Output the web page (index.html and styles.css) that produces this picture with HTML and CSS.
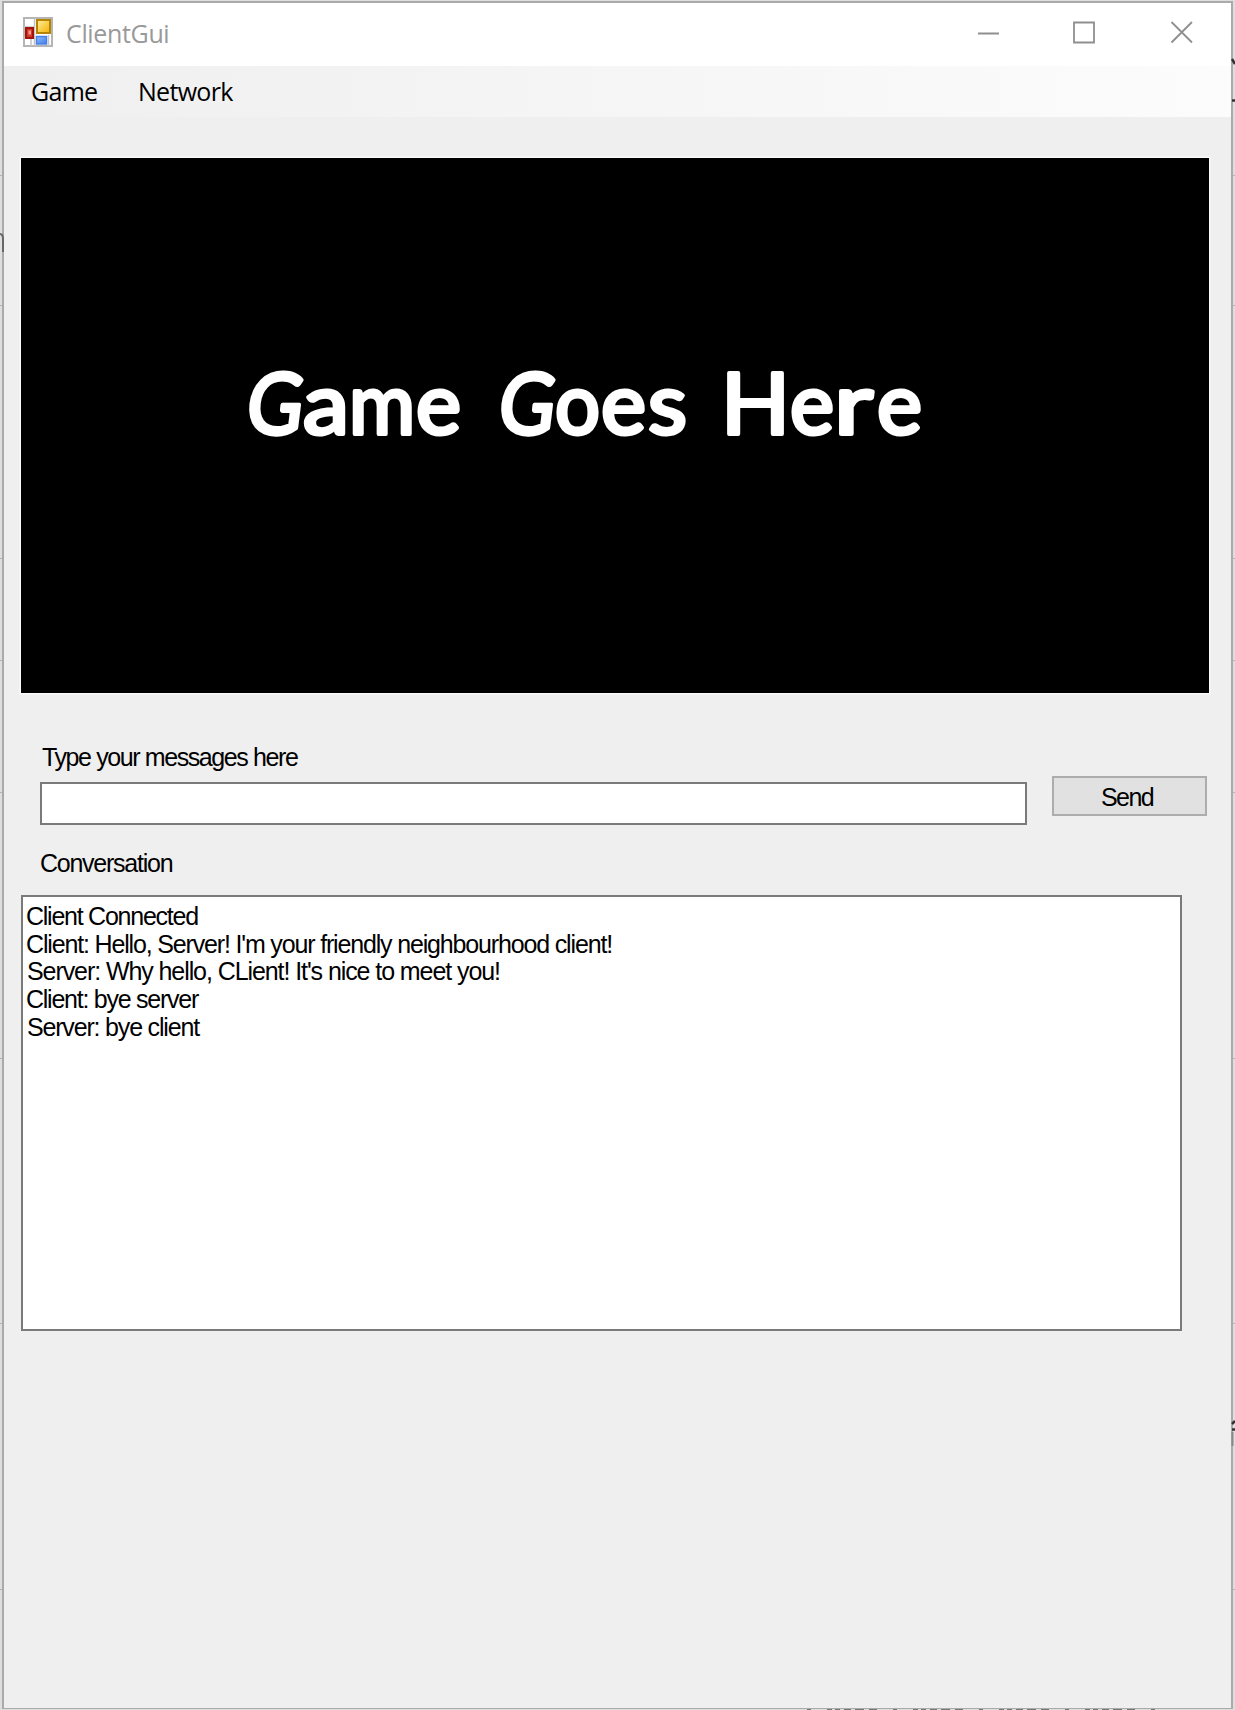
FILE: index.html
```html
<!DOCTYPE html>
<html lang="en">
<head>
<meta charset="utf-8">
<title>ClientGui</title>
<link rel="stylesheet" href="styles.css">
</head>
<body>
<svg class="desktop" width="1235" height="1710" viewBox="0 0 1235 1710" aria-hidden="true">
  <path d="M0 175.500H1235M0 305.500H1235M0 558.500H1235M0 660.500H1235M0 792.500H1235M0 1058.500H1235M0 1323.500H1235M0 1589.500H1235" stroke="#b4b4b8"/>
</svg>
<main class="window">
  <header class="titlebar">
    <svg class="app-icon" width="30" height="30" viewBox="0 0 30 30" aria-hidden="true">
      <path d="M1 1H29V29H1Z" fill="#fff" stroke="#b5b5b5" stroke-width="2"/>
      <path d="M11.500 1V29M1 10H12M1 21H12M8 21V29M25.500 18V29" stroke="#c4c4c4" stroke-width="1.500"/>
      <defs>
        <linearGradient id="gold" x2="1" y2="1"><stop stop-color="#fff0a0"/><stop offset="1" stop-color="#f3b000"/></linearGradient>
        <linearGradient id="blue" x2="1" y2="1"><stop stop-color="#8fbaff"/><stop offset="1" stop-color="#3f7fe8"/></linearGradient>
      </defs>
      <rect x="14" y="3" width="13" height="13" fill="url(#gold)" stroke="#b58400" stroke-width="2"/>
      <rect x="3" y="11" width="7" height="10" fill="#d0382c" stroke="#a51208" stroke-width="2"/>
      <rect x="5.500" y="13.500" width="2.500" height="4" fill="#ff9c90"/>
      <rect x="13.500" y="19.500" width="10" height="7.500" fill="url(#blue)" stroke="#4a82e4" stroke-width="1.500"/>
    </svg>
    <h1 class="title">ClientGui</h1>
    <svg class="controls" width="216" height="24" viewBox="0 0 216 24" aria-hidden="true">
      <path d="M1 13.500H22M97 2.500H117V22.500H97ZM194.500 2L215 22.500M215 2L194.500 22.500" fill="none" stroke="#8f8f8f" stroke-width="1.800"/>
    </svg>
  </header>
  <nav class="menu"><span class="menu-game">Game</span><span class="menu-network">Network</span></nav>
  <section class="game">
    <svg width="1188" height="535" viewBox="21 158 1188 535">
      <g class="game-text">
        <text transform="translate(244 434) skewX(-7)" textLength="56" lengthAdjust="spacingAndGlyphs">G</text>
        <text y="434"><tspan x="303" textLength="46" lengthAdjust="spacingAndGlyphs">a</tspan><tspan x="349" textLength="66" lengthAdjust="spacingAndGlyphs">m</tspan><tspan x="416" textLength="45" lengthAdjust="spacingAndGlyphs">e</tspan></text>
        <text transform="translate(496 434) skewX(-7)" textLength="56" lengthAdjust="spacingAndGlyphs">G</text>
        <text y="434"><tspan x="555" textLength="45" lengthAdjust="spacingAndGlyphs">o</tspan><tspan x="601" textLength="45" lengthAdjust="spacingAndGlyphs">e</tspan><tspan x="648" textLength="39" lengthAdjust="spacingAndGlyphs">s</tspan></text>
        <text y="434"><tspan x="721" textLength="69" lengthAdjust="spacingAndGlyphs">H</tspan><tspan x="790" textLength="44" lengthAdjust="spacingAndGlyphs">e</tspan><tspan x="834" textLength="39" lengthAdjust="spacingAndGlyphs">r</tspan><tspan x="877" textLength="45" lengthAdjust="spacingAndGlyphs">e</tspan></text>
      </g>
    </svg>
  </section>
  <section class="compose">
    <div class="message">
      <label class="message-label" for="msg">Type your messages here</label>
      <input class="field" id="msg" type="text">
    </div>
    <button class="send" type="button">Send</button>
  </section>
  <h2 class="log-title">Conversation</h2>
  <div class="log">
    <p>Client Connected</p>
    <p class="client-long">Client: Hello, Server! I'm your friendly neighbourhood client!</p>
    <p class="server-long">Server: Why hello, CLient! It's nice to meet you!</p>
    <p>Client: bye server</p>
    <p class="server">Server: bye client</p>
  </div>
</main>
<svg class="edges" width="1235" height="1710" viewBox="0 0 1235 1710" aria-hidden="true">
  <path d="M0 234Q3 234 3 239V252" fill="none" stroke="#666" stroke-width="2"/>
  <path d="M1232 59L1235 64M1232 100.500H1235M1232 1424L1235 1421M1232 1429.500H1235" stroke="#333" stroke-width="2.500"/>
  <path d="M1232.500 1432V1446" stroke="#888" stroke-width="2"/>
  <path d="M807 1709.500H1157" stroke="#777" stroke-dasharray="4 16 5 3 5 4 7 4 9 5 8 16"/>
</svg>
</body>
</html>
```
FILE: styles.css
```css
* { box-sizing: border-box; }
body {
  margin: 0;
  padding: 1px 1px 1px 2px;
  height: 1710px;
  overflow: hidden;
  background: #dedede;
  color: #000;
  font-family: "Liberation Sans", Arial, sans-serif;
  font-size: 25px;
}
.desktop, .edges { position: absolute; left: 0; top: 0; pointer-events: none; }
.window {
  position: relative;
  width: 1231px;
  height: 1708px;
  border: 2px solid #aaa;
  border-bottom-width: 1px;
  background: #efefef;
}
.titlebar {
  display: flex;
  align-items: flex-start;
  height: 63px;
  padding: 0 38px 0 19px;
  background: #fff;
}
.app-icon { margin-top: 14px; }
.title {
  margin: 11px 0 0 13px;
  font: 400 25px/38px "Open Sans", sans-serif;
  letter-spacing: -0.35px;
  color: #999;
}
.controls { margin: 17px 0 0 auto; }
.menu {
  display: flex;
  height: 51px;
  padding: 6px 0 0 27px;
  background: linear-gradient(to right, #efefef, #fcfcfc);
  font: 25px/38px "Open Sans", sans-serif;
  letter-spacing: -0.7px;
}
.menu-game { width: 107px; }
.game {
  width: 1188px;
  height: 535px;
  margin: 41px 0 0 17px;
  background: #000;
  box-shadow: 0 0 0 1.5px #fafafa;
}
.game svg { display: block; }
.game-text {
  font: 400 85px "Comic Sans MS", Lato, sans-serif;
  fill: #fff;
  stroke: #fff;
  stroke-width: 4px;
  stroke-linejoin: round;
}
.compose {
  display: flex;
  justify-content: space-between;
  padding: 46px 24px 0 36px;
}
.message { width: 987px; }
.message-label {
  display: block;
  height: 43px;
  padding-left: 2px;
  line-height: 36px;
  letter-spacing: -1.4px;
}
.field {
  display: block;
  width: 100%;
  height: 43px;
  border: 2px solid #7a7a7a;
  border-radius: 0;
  background: #fff;
  font: inherit;
}
.send {
  width: 155px;
  height: 40px;
  margin-top: 37px;
  padding: 2px 5px 0 0;
  border: 2px solid #adadad;
  border-radius: 0;
  background: #e1e1e1;
  color: #000;
  font: inherit;
  letter-spacing: -1.6px;
}
.log-title {
  height: 70px;
  margin: 0;
  padding: 20px 0 0 36px;
  font: inherit;
  line-height: 36px;
  letter-spacing: -1.25px;
}
.log {
  width: 1161px;
  height: 436px;
  margin-left: 17px;
  padding: 6px 3px;
  border: 2px solid #7a7a7a;
  background: #fff;
  letter-spacing: -1.25px;
  line-height: 27.7px;
}
.log p { margin: 0; white-space: nowrap; }
.log .client-long { letter-spacing: -1.16px; }
.log .server-long { padding-left: 1px; letter-spacing: -1.08px; }
.log .server { padding-left: 1px; letter-spacing: -1.18px; }
```
